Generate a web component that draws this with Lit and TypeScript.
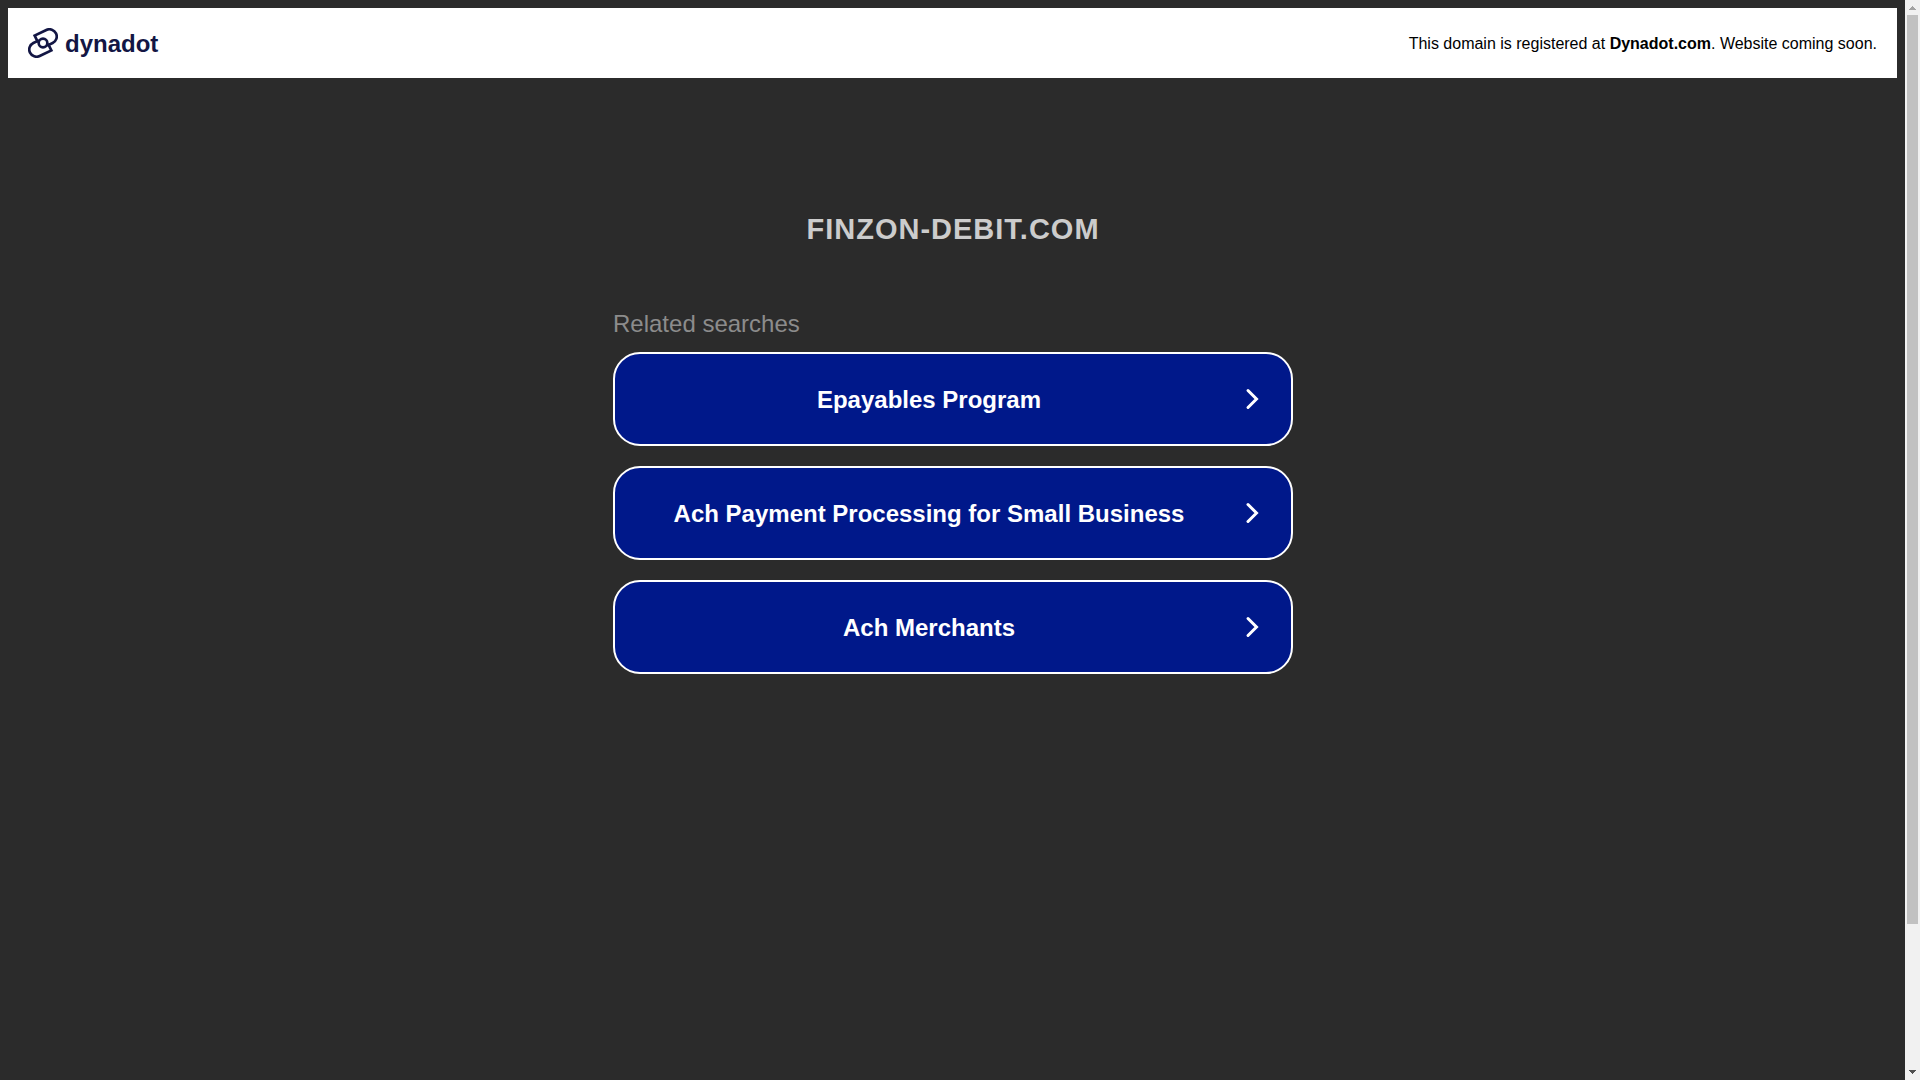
import { LitElement, html, css, svg } from "lit";
import { customElement, property } from "lit/decorators.js";

@customElement("brand-logo")
class BrandLogo extends LitElement {
  static styles = css`
    :host {
      display: block;
    }
    .logo {
      display: flex;
      align-items: center;
      gap: 7px;
      color: #131644;
      text-decoration: none;
      font: bold 24px/28px "Liberation Sans", Arial, sans-serif;
    }
    .mark {
      width: 30px;
      height: 30px;
      fill: none;
      stroke: currentColor;
      stroke-width: 8;
    }
    .name {
      padding-top: 2px;
    }
  `;

  render() {
    return html`<a class="logo" href="#">
      <svg class="mark" viewBox="0 0 90 90" aria-hidden="true">
        ${svg`<path d="M30 43 20 23 55 6A21.500 21.500 0 0 1 74 45L57 53" />
        <path d="M60 47 70 67 35 84A21.500 21.500 0 0 1 16 45L33 37" />
        <circle cx="45" cy="45" r="13" />`}
      </svg>
      <span class="name">dynadot</span>
    </a>`;
  }
}

@customElement("search-link")
class SearchLink extends LitElement {
  @property() label = "";

  static styles = css`
    :host {
      display: block;
    }
    .link {
      display: flex;
      align-items: center;
      box-sizing: border-box;
      min-height: 94px;
      padding: 8px 31px 8px 9px;
      border: 2px solid #fff;
      border-radius: 27px;
      background: #00188a;
      color: #fff;
      text-decoration: none;
      font: bold 24px/28px "Liberation Sans", Arial, sans-serif;
    }
    .label {
      flex: 1;
      padding-top: 2px;
      text-align: center;
    }
    .chevron {
      width: 26px;
      height: 24px;
      fill: none;
      stroke: currentColor;
      stroke-width: 3;
      stroke-linecap: round;
    }
  `;

  render() {
    return html`<a class="link" href="#">
      <span class="label">${this.label}</span>
      <svg class="chevron" viewBox="0 0 26 24" aria-hidden="true">
        <path d="M14 3.500 22.500 12 14 20.500" />
      </svg>
    </a>`;
  }
}

@customElement("app-root")
class AppRoot extends LitElement {
  static styles = css`
    :host {
      display: flex;
      min-height: 100vh;
      background: #2b2b2b;
      font-family: "Liberation Sans", Arial, sans-serif;
    }
    .page {
      flex: 1;
      box-sizing: border-box;
      padding: 8px;
    }
    .banner {
      display: flex;
      align-items: center;
      justify-content: space-between;
      padding: 20px;
      background: #fff;
    }
    .notice {
      margin: 0;
      padding-top: 2px;
      color: #000;
      font: 16px/28px "Liberation Sans", Arial, sans-serif;
    }
    .content {
      max-width: 680px;
      margin: 0 auto;
      padding: 132px 0 0 1px;
    }
    .domain {
      margin: 0 0 60px;
      color: #ccc;
      font-size: 29px;
      line-height: 38px;
      letter-spacing: 1px;
      text-align: center;
      text-transform: uppercase;
    }
    .caption {
      margin: 0 0 12px;
      color: #8c8c8c;
      font-size: 24px;
      line-height: 32px;
    }
    .results {
      display: grid;
      gap: 20px;
      margin: 0;
      padding: 0;
      list-style: none;
    }
    .scrollbar {
      display: flex;
      flex-direction: column;
      width: 15px;
      background: #f1f1f1;
    }
    .arrow {
      width: 15px;
      height: 15px;
      fill: #a3a3a3;
    }
    .arrow.down {
      fill: #505050;
    }
    .track {
      display: flex;
      flex: 1;
      flex-direction: column;
      padding: 0 2px;
    }
    .thumb {
      flex: 0 0 86.6%;
      background: #c1c1c1;
    }
  `;

  private searches = [
    "Epayables Program",
    "Ach Payment Processing for Small Business",
    "Ach Merchants",
  ];

  render() {
    return html`
      <div class="page">
        <header class="banner">
          <brand-logo></brand-logo>
          <p class="notice">This domain is registered at <b>Dynadot.com</b>. Website coming soon.</p>
        </header>
        <main class="content">
          <h1 class="domain">finzon-debit.com</h1>
          <p class="caption">Related searches</p>
          <ul class="results">
            ${this.searches.map((s) => html`<li><search-link label=${s}></search-link></li>`)}
          </ul>
        </main>
      </div>
      <div class="scrollbar" aria-hidden="true">
        <svg class="arrow" viewBox="0 0 15 15"><path d="M7 6h1v1h1v1h1v1h1v1H4V9h1V8h1V7h1z" /></svg>
        <div class="track"><div class="thumb"></div></div>
        <svg class="arrow down" viewBox="0 0 15 15"><path d="M4 5h7v1h-1v1H9v1H8v1H7V8H6V7H5V6H4z" /></svg>
      </div>
    `;
  }
}
